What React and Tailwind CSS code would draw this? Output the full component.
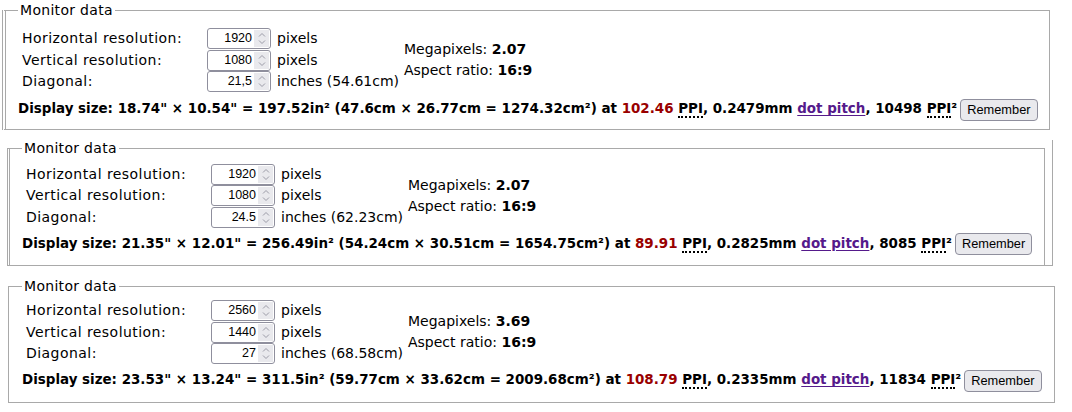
import React from "react";

const monitors = [
  {
    h: "1920", v: "1080", diag: "21,5", cm: "54.61", mp: "2.07", ratio: "16:9",
    w: "18.74", hh: "10.54", area: "197.52", wcm: "47.6", hcm: "26.77", acm: "1274.32",
    ppi: "102.46", pitch: "0.2479", ppi2: "10498",
  },
  {
    h: "1920", v: "1080", diag: "24.5", cm: "62.23", mp: "2.07", ratio: "16:9",
    w: "21.35", hh: "12.01", area: "256.49", wcm: "54.24", hcm: "30.51", acm: "1654.75",
    ppi: "89.91", pitch: "0.2825", ppi2: "8085",
  },
  {
    h: "2560", v: "1440", diag: "27", cm: "68.58", mp: "3.69", ratio: "16:9",
    w: "23.53", hh: "13.24", area: "311.5", wcm: "59.77", hcm: "33.62", acm: "2009.68",
    ppi: "108.79", pitch: "0.2335", ppi2: "11834",
  },
];

function NumberBox({ value }) {
  return (
    <div className="flex h-[21px] w-[64px] items-stretch rounded-[3px] border border-[#8f8f9d] bg-white">
      <span className="flex flex-1 items-center justify-end pr-[2px] font-['Liberation_Sans',sans-serif] text-[12.5px] text-black">
        {value}
      </span>
      <span className="my-[1px] mr-[1px] flex w-[15px] flex-col items-center justify-center gap-[3px] bg-[#e9e9ed]">
        <svg width="8" height="5" viewBox="0 0 8 5" fill="none">
          <path d="M1 4.5 L4 1.5 L7 4.5" stroke="#9a9aa6" strokeWidth="1" />
        </svg>
        <svg width="8" height="5" viewBox="0 0 8 5" fill="none">
          <path d="M1 0.5 L4 3.5 L7 0.5" stroke="#9a9aa6" strokeWidth="1" />
        </svg>
      </span>
    </div>
  );
}

function Ppi() {
  return (
    <abbr className="no-underline border-b-2 border-dotted border-black">PPI</abbr>
  );
}

function MonitorBody({ m, gap }) {
  const rows = [
    ["Horizontal resolution:", m.h, "pixels"],
    ["Vertical resolution:", m.v, "pixels"],
    ["Diagonal:", m.diag, `inches (${m.cm}cm)`],
  ];
  return (
    <div>
      <div className="flex items-center">
        <div className="pl-[4px]">
          {rows.map(([label, value, unit]) => (
            <div key={label} className="flex h-[21.5px] items-center">
              <span className="w-[185px] tracking-[0.45px]">{label}</span>
              <NumberBox value={value} />
              <span className="ml-[6px] w-[127px]">{unit}</span>
            </div>
          ))}
        </div>
        <div className="leading-[21px]">
          <div>
            Megapixels: <b>{m.mp}</b>
          </div>
          <div>
            Aspect ratio: <b>{m.ratio}</b>
          </div>
        </div>
      </div>
      <div className={`${gap} flex h-[22px] items-center whitespace-nowrap text-[13.45px] font-bold`}>
        <span>
          Display size: {m.w}" × {m.hh}" = {m.area}in² ({m.wcm}cm × {m.hcm}cm = {m.acm}cm²) at{" "}
          <span className="text-[#990000]">{m.ppi}</span> <Ppi />, {m.pitch}mm{" "}
          <a href="#" className="text-[#551a8b] underline underline-offset-2">dot pitch</a>, {m.ppi2} <Ppi />²
        </span>
        <button className="ml-[3px] h-[22px] rounded-[4px] border border-[#8f8f9d] bg-[#e9e9ed] px-[6px] font-['Liberation_Sans',sans-serif] text-[12.8px] font-normal text-black">
          Remember
        </button>
      </div>
    </div>
  );
}

export default function App() {
  return (
    <div className="min-h-[412px] bg-white pt-[2px] font-['DejaVu_Sans',sans-serif] text-[14px] text-black">
      {/* first monitor */}
      <fieldset className="ml-[2px] w-[1048px] border border-l-4 border-double border-[#a9a9a9] pb-[8px] pl-[12px]">
        <legend className="px-[2px] leading-[17px] tracking-[0.3px]">Monitor data</legend>
        <div className="pt-[9px]">
          <MonitorBody m={monitors[0]} gap="mt-[6px]" />
        </div>
      </fieldset>

      {/* second monitor */}
      <div className="ml-[7px] mt-[10px] w-[1046px] border-r border-b border-[#a9a9a9] pr-[7px]">
        <fieldset className="border border-b-0 border-l-[3px] border-double border-[#a9a9a9] pb-[10px] pl-[12px]">
          <legend className="px-[2px] leading-[17px] tracking-[0.3px]">Monitor data</legend>
          <div className="pt-[7px]">
            <MonitorBody m={monitors[1]} gap="mt-[5px]" />
          </div>
        </fieldset>
      </div>

      {/* third monitor */}
      <fieldset className="ml-[8px] mt-[12px] w-[1047px] border border-[#a9a9a9] pb-[10px] pl-[13px]">
        <legend className="px-[2px] leading-[17px] tracking-[0.3px]">Monitor data</legend>
        <div className="pt-[5px]">
          <MonitorBody m={monitors[2]} gap="mt-[5px]" />
        </div>
      </fieldset>
    </div>
  );
}
